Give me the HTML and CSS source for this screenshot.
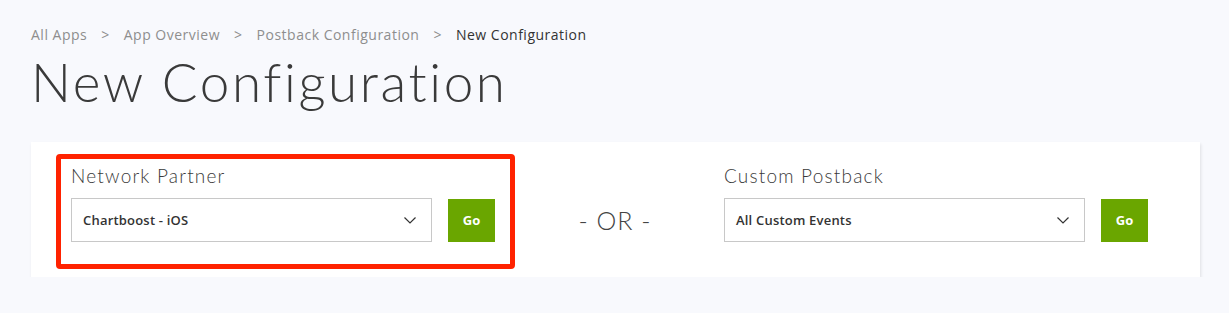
FILE: index.html
```html
<!DOCTYPE html>
<html lang="en">
<head>
<meta charset="utf-8">
<title>New Configuration</title>
<link rel="stylesheet" href="styles.css">
</head>
<body>
<div class="page">
  <nav class="crumbs">
    <a class="crumb">All Apps</a><span class="sep">&gt;</span>
    <a class="crumb">App Overview</a><span class="sep">&gt;</span>
    <a class="crumb">Postback Configuration</a><span class="sep">&gt;</span>
    <span class="crumb current">New Configuration</span>
  </nav>
  <h1 class="title">New Configuration</h1>
  <section class="card">
    <div class="group highlighted">
      <label class="label">Network Partner</label>
      <div class="row">
        <div class="select">
          <span class="value">Chartboost - iOS</span>
          <svg class="chev" width="12" height="7" viewBox="0 0 12 7"><path d="M0.5 0.5 L6 6 L11.5 0.5" fill="none" stroke="#333" stroke-width="1.2"/></svg>
        </div>
        <button class="go">Go</button>
      </div>
    </div>
    <div class="or">- OR -</div>
    <div class="group">
      <label class="label">Custom Postback</label>
      <div class="row">
        <div class="select">
          <span class="value">All Custom Events</span>
          <svg class="chev" width="12" height="7" viewBox="0 0 12 7"><path d="M0.5 0.5 L6 6 L11.5 0.5" fill="none" stroke="#333" stroke-width="1.2"/></svg>
        </div>
        <button class="go">Go</button>
      </div>
    </div>
  </section>
</div>
</body>
</html>
```

FILE: styles.css
```css
html, body {
  margin: 0;
  padding: 0;
  background: #f8f9fd;
}
body {
  font-family: "Lato", "Open Sans", sans-serif;
  color: #333;
}
.page {
  padding: 25px 29px 0 31px;
}
.crumbs {
  display: flex;
  align-items: center;
  font-family: "Open Sans", "Lato", sans-serif;
  font-size: 14px;
  line-height: 20px;
  height: 20px;
  letter-spacing: 0.5px;
}
.crumb {
  color: #8e8e8e;
}
.crumb.current {
  color: #333;
}
.sep {
  color: #8e8e8e;
  margin: 0 14px;
}
.title {
  margin: 0;
  margin-top: 6px;
  font-size: 53px;
  line-height: 62px;
  font-weight: 300;
  color: #3a3a3a;
  letter-spacing: 2.6px;
}
.card {
  margin-top: 29px;
  background: #fff;
  box-shadow: 1px 2px 3px rgba(0, 0, 0, 0.1);
  display: flex;
  align-items: flex-start;
  padding: 12px 25px 8px 25px;
}
.group {
  border: 5px solid transparent;
  border-radius: 4px;
  padding: 6px 15px 22px 10px;
}
.group.highlighted {
  border-color: #ff2200;
}
.label {
  display: block;
  font-size: 19px;
  line-height: 22px;
  font-weight: 300;
  color: #3a3a3a;
  letter-spacing: 1.2px;
}
.row {
  display: flex;
  align-items: center;
  gap: 16px;
  margin-top: 11px;
}
.select {
  box-sizing: border-box;
  width: 361px;
  height: 44px;
  border: 1px solid #c8c8c8;
  background: #fff;
  display: flex;
  align-items: center;
  justify-content: space-between;
  padding: 0 15px 0 11px;
}
.value {
  font-family: "Open Sans", "Lato", sans-serif;
  font-size: 13px;
  font-weight: 600;
  color: #333;
  letter-spacing: 0.2px;
}
.go {
  width: 47px;
  height: 43px;
  border: 0;
  padding: 0;
  background: #6aa600;
  color: #fff;
  font-family: "Open Sans", sans-serif;
  font-size: 13px;
  font-weight: 700;
}
.or {
  width: 194px;
  align-self: center;
  text-align: center;
  padding-left: 6px;
  box-sizing: border-box;
  font-size: 25px;
  font-weight: 300;
  color: #444;
  letter-spacing: 1px;
  margin-top: 16px;
}
```
